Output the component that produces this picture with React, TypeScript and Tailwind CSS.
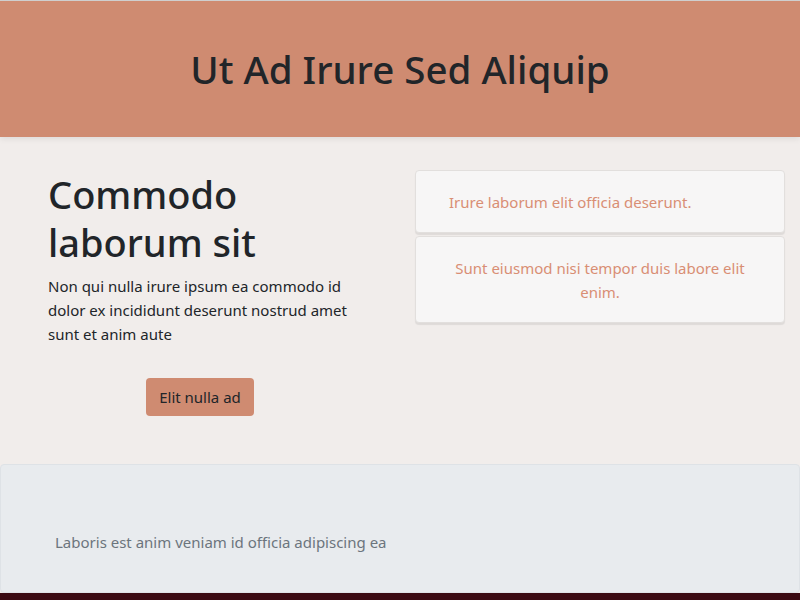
import React from 'react';

const cards = [
  { id: 'a', text: 'Irure laborum elit officia deserunt.', align: 'text-left pl-[33px] pr-4' },
  { id: 'b', text: 'Sunt eiusmod nisi tempor duis labore elit enim.', align: 'text-center px-[33px]' }
];

export default function App() {
  return (
    <div className="min-h-[600px] bg-[#f1edeb] font-['Noto_Sans',sans-serif] text-[#212529]">
      <header className="h-[137px] flex items-center justify-center bg-[#cf8b71] border-t border-[#cfcfcf] shadow-[0_2px_6px_rgba(0,0,0,0.08)]">
        <h1 className="text-[38.5px] leading-[1.2] font-medium">Ut Ad Irure Sed Aliquip</h1>
      </header>

      <section className="grid grid-cols-2 pt-[33px] pb-[48px]">
        <div className="px-[48px]">
          <h2 className="text-[38px] leading-[48px] font-medium">Commodo laborum sit</h2>
          <p className="mt-[8px] text-[15px] leading-6">
            Non qui nulla irure ipsum ea commodo id dolor ex incididunt deserunt nostrud amet sunt et anim aute
          </p>
          <div className="mt-[32px] flex justify-center">
            <button className="h-[38px] px-[13px] rounded bg-[#cf8b71] text-[15px] text-[#212529]">
              Elit nulla ad
            </button>
          </div>
        </div>

        <div className="px-[15px] flex flex-col gap-[3px]">
          {cards.map((card) => (
            <div
              key={card.id}
              className={`bg-[#f7f6f6] border border-[#e2dfdd] rounded shadow-[0_2px_1px_rgba(0,0,0,0.08)] pt-[19px] pb-[18px] text-[15px] leading-6 text-[#d98e74] ${card.align}`}
            >
              {card.text}
            </div>
          ))}
        </div>
      </section>

      <footer className="h-[129px] bg-[#e8ebee] border border-[#dee2e6] rounded pt-[65px] pl-[54px]">
        <p className="text-[15px] leading-6 text-[#6c757d]">
          Laboris est anim veniam id officia adipiscing ea
        </p>
      </footer>
      <div className="h-[7px] bg-[#3b0a12]"></div>
    </div>
  );
}
